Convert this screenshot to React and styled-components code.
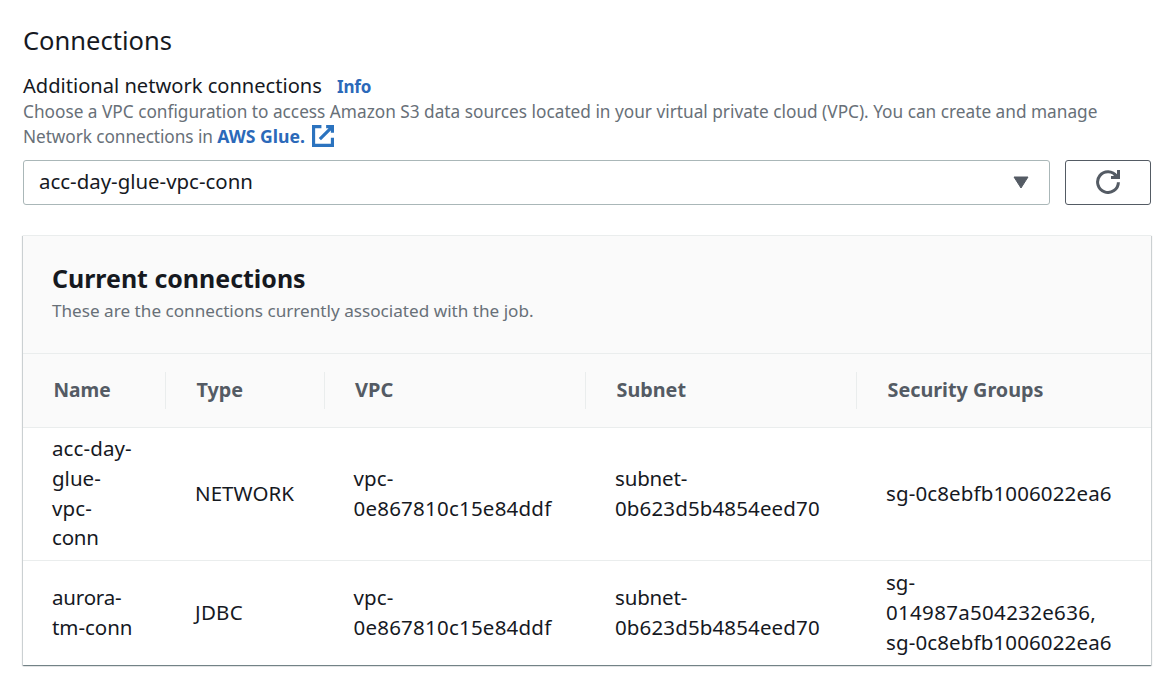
import React from 'react';
import styled, { createGlobalStyle } from 'styled-components';

const GlobalStyle = createGlobalStyle`
  *, *::before, *::after { box-sizing: border-box; }
  body {
    margin: 0;
    background: #fff;
    color: #16191f;
    font-family: "Noto Sans", "Open Sans", sans-serif;
  }
`;

const Page = styled.main`
  width: 1170px;
  min-height: 682px;
  padding: 25px 19px 0 23px;
`;

const Title = styled.h1`
  margin: 0 0 17px;
  font-size: 25.5px;
  font-weight: 400;
  line-height: 30px;
`;

const LabelRow = styled.div`
  display: flex;
  align-items: baseline;
  gap: 15px;
  height: 27px;
  line-height: 27px;
`;

const Label = styled.label`
  font-size: 20.1px;
`;

const Link = styled.a`
  color: #2b69b9;
  font-size: ${(p) => p.$size}px;
  font-weight: 700;
  letter-spacing: ${(p) => p.$track || 0}px;
  text-decoration: none;
`;

const HelpText = styled.p`
  margin: 0;
  color: #687078;
  font-size: 17.24px;
  line-height: 25px;
  white-space: nowrap;
`;

const HelpLead = styled.span`
  letter-spacing: -0.07px;
`;

const ExternalIcon = styled.svg`
  width: 22px;
  height: 22px;
  margin-left: 3px;
  vertical-align: -4px;
  fill: none;
  stroke: #2b73bf;
  stroke-width: 2;
`;

const Controls = styled.div`
  display: flex;
  gap: 15px;
  margin-top: 11px;
`;

const Select = styled.button`
  display: flex;
  flex: 1;
  align-items: center;
  justify-content: space-between;
  height: 45px;
  padding: 0 20px 2px 15px;
  border: 1px solid #aab7b8;
  border-radius: 3px;
  background: #fff;
  color: inherit;
  font: 20.43px "Noto Sans", sans-serif;
`;

const SelectValue = styled.span`
  padding-bottom: 2px;
`;

const Caret = styled.svg`
  width: 16px;
  height: 13px;
  margin-top: 1px;
  fill: #545b64;
  stroke: #545b64;
  stroke-linejoin: round;
`;

const RefreshButton = styled.button`
  display: flex;
  align-items: center;
  justify-content: center;
  width: 86px;
  height: 45px;
  padding: 0;
  border: 1px solid #545b64;
  border-radius: 3px;
  background: #fff;
`;

const RefreshIcon = styled.svg`
  width: 24px;
  height: 24px;
  margin-bottom: 1px;
  fill: none;
  stroke: #545b64;
  stroke-width: 3;
`;

const Panel = styled.section`
  width: 1128px;
  margin-top: 30px;
  background: #fff;
  box-shadow: 0 1px 1px 0 rgba(0, 28, 36, 0.38), 1px 1px 1px 0 rgba(0, 28, 36, 0.15),
    -1px 1px 1px 0 rgba(0, 28, 36, 0.15);
`;

const PanelHeader = styled.header`
  height: 119px;
  padding: 25px 29px 0;
  border-top: 1px solid #eaeded;
  border-bottom: 1px solid #eaeded;
  background: #fafafa;
`;

const PanelTitle = styled.h2`
  margin: 0;
  font-size: 24.95px;
  font-weight: 700;
  line-height: 34px;
`;

const PanelText = styled.p`
  margin: 3px 0 0;
  color: #687078;
  font-size: 17.15px;
  line-height: 26px;
`;

const Row = styled.div`
  display: grid;
  grid-template-columns: 143px 158.5px 261.5px 271px 1fr;
  align-items: center;
`;

const HeadRow = styled(Row)`
  height: 74px;
  border-bottom: 1px solid #eaeded;
  background: #fafafa;
`;

const HeadCell = styled.div`
  height: 37px;
  padding-left: 30.5px;
  border-right: 1px solid #eaeded;
  color: #545b64;
  font-size: ${(p) => p.$size || 19.8}px;
  font-weight: 700;
  line-height: 36px;

  &:last-child { border-right: 0; }
`;

const BodyRow = styled(Row)`
  height: ${(p) => p.$height}px;
  padding-bottom: ${(p) => (p.$last ? 0 : 1)}px;
  border-bottom: ${(p) => (p.$last ? 0 : 1)}px solid #eaeded;
`;

const Cell = styled.div`
  padding-left: 29px;
  font-size: 20.5px;
  line-height: 29.7px;
`;

const Line = styled.div`
  letter-spacing: ${(p) => p.$track || 0}px;
  white-space: nowrap;
`;

const columns = [
  { name: 'Name', size: 19.2 },
  { name: 'Type' },
  { name: 'VPC', size: 20 },
  { name: 'Subnet' },
  { name: 'Security Groups' },
];

const VPC = [['vpc-', 0.1], ['0e867810c15e84ddf', 0.22]];
const SUBNET = [['subnet-', -0.18], ['0b623d5b4854eed70', 0.13]];
const SG = ['sg-0c8ebfb1006022ea6', 0.13];

const rows = [
  {
    height: 133,
    cells: [
      [['acc-day-', 0.1], ['glue-'], ['vpc-', 0.1], ['conn', -0.2]],
      [['NETWORK', 0.05]],
      VPC,
      SUBNET,
      [SG],
    ],
  },
  {
    height: 104,
    cells: [
      [['aurora-', -0.2], ['tm-conn', -0.05]],
      [['JDBC', 0.28]],
      VPC,
      SUBNET,
      [['sg-'], ['014987a504232e636,', 0.31], SG],
    ],
  },
];

export default function App() {
  return (
    <>
      <GlobalStyle />
      <Page>
        <Title>Connections</Title>
        <LabelRow>
          <Label>Additional network connections</Label>
          <Link $size={17} $track={-0.1}>Info</Link>
        </LabelRow>
        <HelpText>
          Choose a VPC configuration to access Amazon S3 data sources located in your virtual
          private cloud (VPC). You can create and manage
          <br />
          <HelpLead>Network connections in </HelpLead>
          <Link $size={17.6}>AWS Glue.</Link>{' '}
          <ExternalIcon viewBox="1 1 14 14">
            <path d="M10 2h4v4M6 10l8-8M14 9.05V14H2V2h5" />
          </ExternalIcon>
        </HelpText>
        <Controls>
          <Select>
            <SelectValue>acc-day-glue-vpc-conn</SelectValue>
            <Caret viewBox="0 0 16 13">
              <path d="M1 1h14L8 12z" />
            </Caret>
          </Select>
          <RefreshButton aria-label="Refresh">
            <RefreshIcon viewBox="0 0 24 24">
              <path d="M22.4 12.2A10.4 10.4 0 1 1 20.6 6.2" />
              <path d="M22.5 0v7.5H15" />
              <path d="M18.5 4.5l3 3" />
            </RefreshIcon>
          </RefreshButton>
        </Controls>
        <Panel>
          <PanelHeader>
            <PanelTitle>Current connections</PanelTitle>
            <PanelText>These are the connections currently associated with the job.</PanelText>
          </PanelHeader>
          <HeadRow>
            {columns.map((c) => (
              <HeadCell key={c.name} $size={c.size}>{c.name}</HeadCell>
            ))}
          </HeadRow>
          {rows.map((row, i) => (
            <BodyRow key={i} $height={row.height} $last={i === rows.length - 1}>
              {row.cells.map((lines, j) => (
                <Cell key={j}>
                  {lines.map(([text, track]) => (
                    <Line key={text} $track={track}>{text}</Line>
                  ))}
                </Cell>
              ))}
            </BodyRow>
          ))}
        </Panel>
      </Page>
    </>
  );
}
